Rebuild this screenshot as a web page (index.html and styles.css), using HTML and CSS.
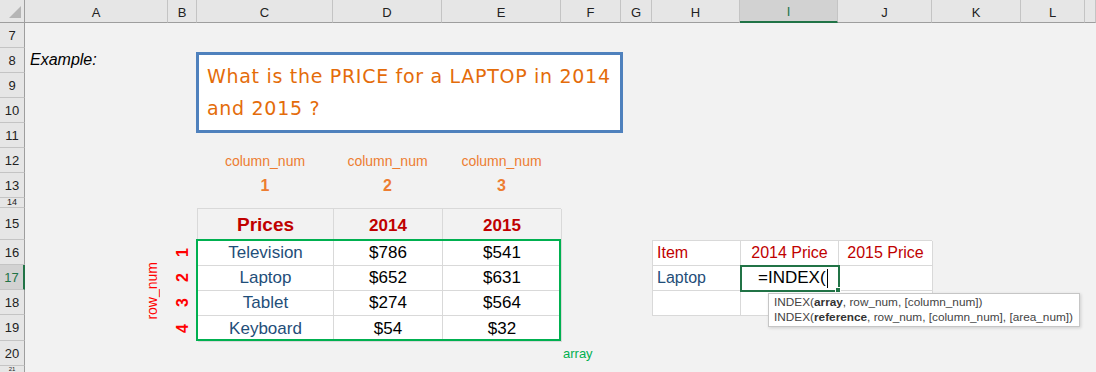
FILE: index.html
```html
<!DOCTYPE html>
<html lang="en">
    <head>
        <meta charset="UTF-8" />
        <title>INDEX function example</title>
        <link rel="stylesheet" href="styles.css">
    </head>
    <body>
        <div class="sheet">
            <div class="corner"><span class="corner-mark"></span></div>

            <div class="col-head">A</div>
            <div class="col-head">B</div>
            <div class="col-head">C</div>
            <div class="col-head">D</div>
            <div class="col-head">E</div>
            <div class="col-head">F</div>
            <div class="col-head">G</div>
            <div class="col-head">H</div>
            <div class="col-head selected">I</div>
            <div class="col-head">J</div>
            <div class="col-head">K</div>
            <div class="col-head">L</div>
            <div class="col-head"></div>

            <div class="row-head">7</div>
            <div class="row-head">8</div>
            <div class="row-head">9</div>
            <div class="row-head">10</div>
            <div class="row-head">11</div>
            <div class="row-head">12</div>
            <div class="row-head">13</div>
            <div class="row-head short">14</div>
            <div class="row-head">15</div>
            <div class="row-head">16</div>
            <div class="row-head selected">17</div>
            <div class="row-head">18</div>
            <div class="row-head">19</div>
            <div class="row-head">20</div>
            <div class="row-head last">21</div>

            <div class="example-label">Example:</div>

            <div class="question-box">
                What is the PRICE for a LAPTOP in 2014<br>and 2015 ?
            </div>

            <div class="col-label c1">column_num</div>
            <div class="col-label c2">column_num</div>
            <div class="col-label c3">column_num</div>
            <div class="col-num c1">1</div>
            <div class="col-num c2">2</div>
            <div class="col-num c3">3</div>

            <div class="row-label"><span>row_num</span></div>
            <div class="row-num r1"><span>1</span></div>
            <div class="row-num r2"><span>2</span></div>
            <div class="row-num r3"><span>3</span></div>
            <div class="row-num r4"><span>4</span></div>

            <div class="price-table">
                <div class="cell head big">Prices</div>
                <div class="cell head">2014</div>
                <div class="cell head">2015</div>

                <div class="cell item">Television</div>
                <div class="cell">$786</div>
                <div class="cell">$541</div>

                <div class="cell item">Laptop</div>
                <div class="cell">$652</div>
                <div class="cell">$631</div>

                <div class="cell item">Tablet</div>
                <div class="cell">$274</div>
                <div class="cell">$564</div>

                <div class="cell item">Keyboard</div>
                <div class="cell">$54</div>
                <div class="cell">$32</div>
            </div>
            <div class="array-outline"></div>
            <div class="array-label">array</div>

            <div class="lookup">
                <div class="lookup-table">
                    <div class="lcell red">Item</div>
                    <div class="lcell red center">2014 Price</div>
                    <div class="lcell red center">2015 Price</div>

                    <div class="lcell blue">Laptop</div>
                    <div class="lcell active">=INDEX(<span class="caret"></span><span class="fill-handle"></span></div>
                    <div class="lcell"></div>

                    <div class="lcell"></div>
                    <div class="lcell"></div>
                    <div class="lcell"></div>
                </div>

                <div class="tooltip">
                    <div>INDEX(<b>array</b>, row_num, [column_num])</div>
                    <div>INDEX(<b>reference</b>, row_num, [column_num], [area_num])</div>
                </div>
            </div>
        </div>
    </body>
</html>
```

FILE: styles.css
```css
:root {
    --sheet-bg: #f2f2f2;
    --head-bg: #e6e6e6;
    --head-selected: #d2d2d2;
    --head-line: #c4c4c4;
    --grid-line: #d9d9d9;
    --excel-green: #217346;
    --orange: #ed7d31;
    --dark-red: #c00000;
    --red: #ff0000;
    --blue: #1f4e79;
    --green: #00b050;
}

* {
    box-sizing: border-box;
}

html, body {
    margin: 0;
    padding: 0;
    background-color: var(--sheet-bg);
}

body {
    font-family: 'Liberation Sans', Arial, sans-serif;
    color: #000;
    overflow: hidden;
}

.sheet {
    display: grid;
    grid-template-columns: 25px 143px 29px 136px 109px 119px 60px 31px 88px 98px 94px 89px 64px 11px;
    grid-template-rows: 23px 25px 25px 25px 25px 25px 25px 25px 10px 32px 25px 25px 25px 26px 25px 6px;
    width: 1096px;
    height: 372px;
    background-color: var(--sheet-bg);
}

/* headers */

.corner {
    background-color: var(--head-bg);
    border-right: 1px solid #9e9e9e;
    border-bottom: 1px solid #9e9e9e;
    position: relative;
}

.corner-mark {
    position: absolute;
    right: 3px;
    bottom: 4px;
    width: 0;
    height: 0;
    border-left: 12px solid transparent;
    border-bottom: 12px solid #b5b5b5;
}

.col-head {
    background-color: var(--head-bg);
    border-right: 1px solid var(--head-line);
    border-bottom: 1px solid #9e9e9e;
    display: flex;
    align-items: center;
    justify-content: center;
    font-size: 13px;
    color: #222;
    padding-top: 2px;
}

.col-head.selected {
    background-color: var(--head-selected);
    border-bottom: 2px solid var(--excel-green);
    color: var(--excel-green);
}

.row-head {
    grid-column: 1;
    background-color: var(--head-bg);
    border-right: 1px solid #9e9e9e;
    border-bottom: 1px solid var(--head-line);
    display: flex;
    align-items: center;
    justify-content: center;
    font-size: 13px;
    color: #222;
    overflow: hidden;
}

.row-head.short {
    font-size: 9px;
    line-height: 9px;
}

.row-head.last {
    font-size: 6px;
    line-height: 6px;
    border-bottom: none;
}

.row-head.selected {
    background-color: var(--head-selected);
    border-right: 2px solid var(--excel-green);
    color: var(--excel-green);
}

/* free text on the sheet */

.example-label {
    grid-column: 2;
    grid-row: 3;
    font-style: italic;
    font-size: 16px;
    padding-left: 5px;
    padding-top: 3px;
}

.question-box {
    grid-column: 4 / 8;
    grid-row: 3 / 7;
    margin: 4px -2px 15px -1px;
    background-color: #fff;
    border: 3px solid #4f81bd;
    padding: 5px 8px 0 8px;
    font-family: 'DejaVu Sans', sans-serif;
    font-size: 19px;
    line-height: 32px;
    color: #e46c0a;
    letter-spacing: 0.7px;
    white-space: nowrap;
}

.col-label,
.col-num {
    display: flex;
    align-items: center;
    justify-content: center;
    color: var(--orange);
}

.col-label {
    grid-row: 7;
    font-size: 14px;
}

.col-num {
    grid-row: 8;
    font-size: 16px;
    font-weight: bold;
}

.c1 { grid-column: 4; }
.c2 { grid-column: 5; }
.c3 { grid-column: 6; }

.row-label {
    grid-column: 2;
    grid-row: 11 / 15;
    display: flex;
    align-items: center;
    justify-content: flex-end;
    padding-right: 8px;
    color: var(--red);
    font-size: 14px;
}

.row-label span,
.row-num span {
    writing-mode: vertical-rl;
    transform: rotate(180deg);
}

.row-num {
    grid-column: 3;
    display: flex;
    align-items: center;
    justify-content: center;
    color: var(--red);
    font-size: 16px;
    font-weight: bold;
}

.r1 { grid-row: 11; }
.r2 { grid-row: 12; }
.r3 { grid-row: 13; }
.r4 { grid-row: 14; }

/* price table */

.price-table {
    grid-column: 4 / 7;
    grid-row: 10 / 15;
    display: grid;
    grid-template-columns: 136px 109px 119px;
    grid-template-rows: 32px 25px 25px 25px 26px;
    border-top: 1px solid var(--grid-line);
    border-left: 1px solid var(--grid-line);
}

.cell {
    background-color: #fff;
    border-right: 1px solid var(--grid-line);
    border-bottom: 1px solid var(--grid-line);
    display: flex;
    align-items: center;
    justify-content: center;
    font-size: 17px;
}

.cell.head {
    background-color: var(--sheet-bg);
    color: var(--dark-red);
    font-weight: bold;
    font-size: 17px;
    padding-top: 3px;
}

.cell.head.big {
    font-size: 19px;
    padding-top: 0;
}

.cell.item {
    color: var(--blue);
}

.array-outline {
    grid-column: 4 / 7;
    grid-row: 11 / 15;
    border: 2px solid var(--green);
    margin: -1px 0 0 -1px;
}

.array-label {
    grid-column: 7;
    grid-row: 15;
    display: flex;
    align-items: center;
    padding-left: 2px;
    color: var(--green);
    font-size: 13px;
}

/* lookup table */

.lookup {
    grid-column: 9 / 12;
    grid-row: 11 / 14;
    position: relative;
}

.lookup-table {
    display: grid;
    grid-template-columns: 88px 98px 94px;
    grid-template-rows: 25px 25px 25px;
    border-top: 1px solid var(--grid-line);
    border-left: 1px solid var(--grid-line);
}

.lcell {
    background-color: #fff;
    border-right: 1px solid var(--grid-line);
    border-bottom: 1px solid var(--grid-line);
    display: flex;
    align-items: center;
    padding-left: 4px;
    font-size: 16px;
    white-space: nowrap;
}

.lcell.center {
    justify-content: center;
    padding-left: 0;
}

.lcell.red {
    color: var(--dark-red);
}

.lcell.blue {
    color: var(--blue);
}

.lcell.active {
    position: relative;
    outline: 2px solid var(--excel-green);
    outline-offset: -1px;
    padding-left: 17px;
    font-size: 17px;
    color: #000;
}

.caret {
    display: inline-block;
    width: 1px;
    height: 19px;
    margin-left: 1px;
    background-color: #000;
}

.fill-handle {
    position: absolute;
    right: -3px;
    bottom: -3px;
    width: 6px;
    height: 6px;
    background-color: var(--excel-green);
    border: 1px solid #fff;
}

.tooltip {
    position: absolute;
    left: 116px;
    top: 53px;
    background-color: #fff;
    border: 1px solid #c6c6c6;
    box-shadow: 1px 1px 3px rgba(0, 0, 0, 0.15);
    padding: 1px 6px 1px 5px;
    font-size: 11.8px;
    line-height: 15px;
    color: #444;
    white-space: nowrap;
    z-index: 2;
}

.tooltip b {
    color: #333;
}
```
